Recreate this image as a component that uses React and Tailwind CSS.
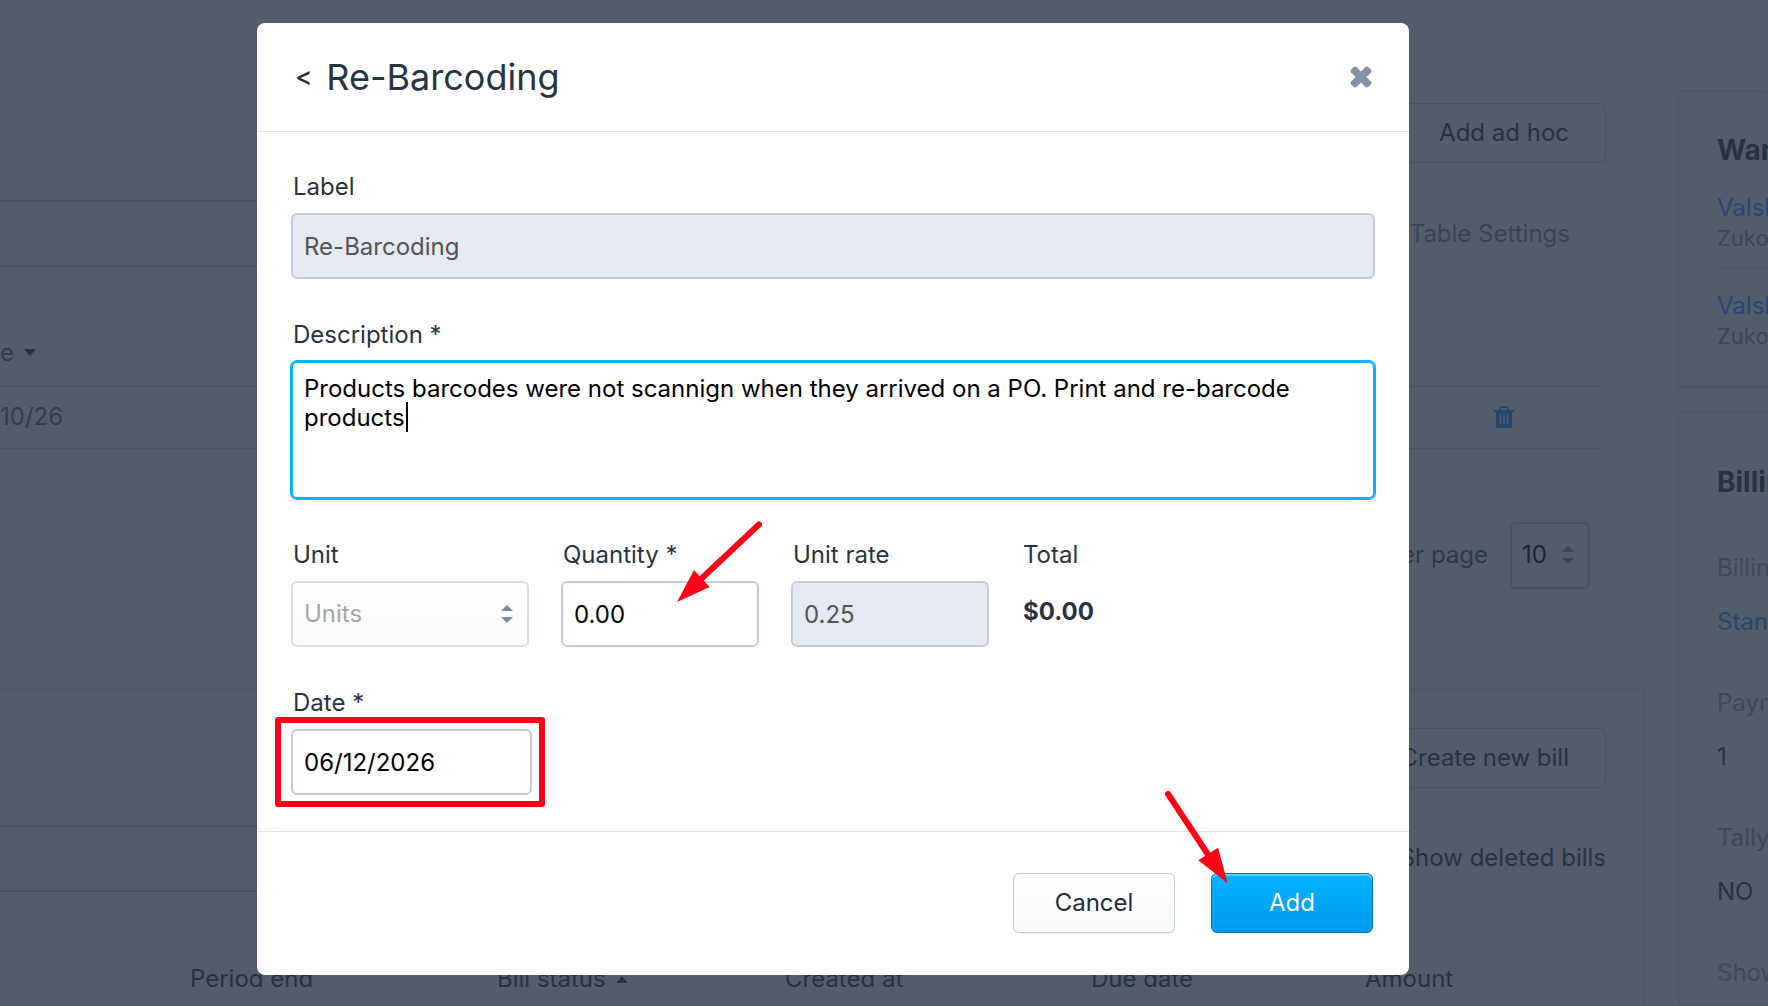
const SortArrows = ({ className }) => (
  <svg viewBox="0 0 12 18" width="12" height="18" fill="currentColor" className={className} aria-hidden="true">
    <path d="M6 0l6 6H0z" />
    <path d="M0 12h12l-6 6z" />
  </svg>
);

const TrashIcon = () => (
  <svg viewBox="0 0 20 22" width="20" height="22" fill="none" aria-hidden="true">
    <path d="M6 4.500L7 1.200H13L14 4.500" stroke="currentColor" strokeWidth="1.800" />
    <path d="M0 4h20v2H0z" fill="currentColor" />
    <path
      d="M2 5h16v14.500a2.500 2.500 0 0 1-2.500 2.500h-11A2.500 2.500 0 0 1 2 19.500z"
      fill="currentColor"
    />
    <path d="M6.500 8v10M10 8v10M13.500 8v10" stroke="#535c6a" strokeWidth="1.500" />
  </svg>
);

const CloseIcon = () => (
  <svg viewBox="0 0 20 20" width="22" height="22" fill="currentColor" aria-hidden="true">
    <rect x="-1" y="6.500" width="22" height="7" rx="2" transform="rotate(45 10 10)" />
    <rect x="-1" y="6.500" width="22" height="7" rx="2" transform="rotate(-45 10 10)" />
  </svg>
);

const QuantityArrow = () => (
  <svg
    viewBox="0 0 92 88"
    width="92"
    height="88"
    className="absolute -top-5 left-[112px] pointer-events-none"
    aria-hidden="true"
  >
    <path d="M86 4.500L28 59" stroke="#ff0018" strokeWidth="6" strokeLinecap="round" />
    <path d="M4 82L21 50L36.600 67z" fill="#ff0018" />
  </svg>
);

const AddArrow = () => (
  <svg
    viewBox="0 0 72 100"
    width="72"
    height="100"
    className="absolute -top-[85px] -left-[49px] pointer-events-none"
    aria-hidden="true"
  >
    <path d="M6 6L47 68" stroke="#ff0018" strokeWidth="6" strokeLinecap="round" />
    <path d="M65.700 95.300L36.300 72.300L56 59.700z" fill="#ff0018" />
  </svg>
);

const Field = ({ id, label, className = "", children }) => (
  <div className={`relative ${className}`}>
    <label htmlFor={id} className="block mb-[11px] pl-[2px] leading-[30px] text-[#273444]">
      {label}
    </label>
    {children}
  </div>
);

const inputStyle = "block w-full h-[66px] px-[11px] rounded-md border-2 outline-none";
const activeInput = `${inputStyle} border-[#c0ccdd] bg-white text-black`;
const disabledInput = `${inputStyle} border-[#c0ccdd] bg-[#e5e9f2] text-[#545454]`;

const backButton =
  "h-[60px] px-9 rounded-md border border-[#465563] text-[#263342] whitespace-nowrap";

const MainColumn = () => (
  <main className="flex-1 min-w-0 flex flex-col">
    <section className="pt-[103px]">
      <div className="flex justify-end pr-[38px]">
        <button type="button" className={backButton}>
          Add ad hoc
        </button>
      </div>
      <div className="flex items-center gap-9 mt-[37px] pr-[74px]">
        <input
          type="text"
          aria-label="Search items"
          className="flex-1 h-[67px] border-y-2 border-r-2 border-[#475663] bg-transparent"
        />
        <button type="button" className="text-[#364555] whitespace-nowrap">
          Table Settings
        </button>
      </div>
      <div className="mt-[53px] mr-[40px]">
        <table className="w-full text-left">
          <thead>
            <tr className="h-[66px] border-b border-[#465462]">
              <th className="font-normal text-[#2f3d4c]">
                <span className="flex items-center gap-[10px]">
                  e
                  <svg viewBox="0 0 12 7" width="12" height="7" fill="#263342" aria-hidden="true">
                    <path d="M0 0h12l-6 7z" />
                  </svg>
                </span>
              </th>
              <th className="w-[110px]" />
            </tr>
          </thead>
          <tbody>
            <tr className="h-[62px] border-b border-[#4a5462]">
              <td className="text-[#303e4c]">10/26</td>
              <td>
                <button type="button" aria-label="Delete" className="block text-[#24486c]">
                  <TrashIcon />
                </button>
              </td>
            </tr>
          </tbody>
        </table>
      </div>
      <div className="flex items-center justify-end gap-[22px] mt-[73px] pr-[54px]">
        <label htmlFor="per-page" className="text-[#2c3a49]">
          Items per page
        </label>
        <div className="relative">
          <select
            id="per-page"
            defaultValue="10"
            className="appearance-none block w-20 h-[67px] pl-[10px] rounded-md border-2 border-[#465563] text-[#1c2632] outline-none"
          >
            <option>10</option>
          </select>
          <SortArrows className="absolute top-6 right-4 text-[#384757] pointer-events-none" />
        </div>
      </div>
    </section>

    <section className="flex-1 mt-[99px] pt-[39px] border-t border-r border-[#4e5865]">
      <div className="flex justify-end pr-[37px]">
        <button type="button" className={backButton}>
          Create new bill
        </button>
      </div>
      <div className="flex items-center gap-9 mt-[37px] pr-[37px]">
        <input
          type="text"
          aria-label="Search bills"
          className="flex-1 h-[67px] border-y-2 border-r-2 border-[#44546a] bg-transparent"
        />
        <button type="button" className="text-[#263342] whitespace-nowrap">
          Show deleted bills
        </button>
      </div>
      <table className="w-full table-fixed mt-[61px] text-left text-[#263342] whitespace-nowrap">
        <thead>
          <tr className="h-[54px] border-b border-[#465462]">
            <th className="w-[190px]" />
            <th className="w-[307px] font-normal">Period end</th>
            <th className="w-[288px] font-normal">
              <span className="flex items-center gap-[10px]">
                Bill status
                <svg viewBox="0 0 12 7" width="12" height="7" fill="currentColor" aria-hidden="true">
                  <path d="M6 0l6 7H0z" />
                </svg>
              </span>
            </th>
            <th className="w-[306px] font-normal">Created at</th>
            <th className="w-[274px] font-normal">Due date</th>
            <th className="font-normal">Amount</th>
          </tr>
        </thead>
      </table>
    </section>
  </main>
);

const sideCard = "border-y border-l border-[#4e5865] pl-[38px] shadow-sm";

const SideColumn = () => (
  <aside className="w-[90px] flex flex-col pt-[91px] overflow-hidden whitespace-nowrap leading-[30px]">
    <section className={`${sideCard} h-[295px] pt-[43px]`}>
      <h2 className="text-[28px] font-bold text-[#263342]">Warehouses</h2>
      <div className="mt-[28px] pb-[15px] border-b border-[#4a5462]">
        <a href="#valsh-1" className="block text-[#284678]">Valsh</a>
        <p className="text-[22px] text-[#3b4857]">Zuko</p>
      </div>
      <div className="mt-[22px]">
        <a href="#valsh-2" className="block text-[#284678]">Valsh</a>
        <p className="text-[22px] text-[#3b4857]">Zuko</p>
      </div>
    </section>
    <section className={`${sideCard} flex-1 mt-[26px] pt-[54px]`}>
      <h2 className="text-[28px] font-bold text-[#263342]">Billing</h2>
      <dl className="mt-[56px]">
        <dt className="text-[#3c4a59]">Billing</dt>
        <dd className="mt-6 mb-[51px]">
          <a href="#profile" className="text-[#24486c]">Standard</a>
        </dd>
        <dt className="text-[#3c4a59]">Payment</dt>
        <dd className="mt-6 mb-[51px] text-[#263342]">1</dd>
        <dt className="text-[#3c4a59]">Tally</dt>
        <dd className="mt-6 mb-[51px] text-[#263342]">NO</dd>
        <dt className="text-[#3c4a59]">Show</dt>
      </dl>
    </section>
  </aside>
);

const Modal = () => (
  <div className="absolute inset-0 pt-[23px] pl-[257px] pr-[359px]">
    <div role="dialog" aria-labelledby="modal-title" className="rounded-lg bg-white text-[#273444]">
      <header className="flex items-center justify-between py-8 pl-[38px] pr-[37px] border-b border-[#e0e2e4]">
        <div className="flex items-center gap-[14px] leading-[44px]">
          <button type="button" aria-label="Back" className="text-[26px] font-medium">
            &lt;
          </button>
          <h1 id="modal-title" className="text-[36px]">
            Re-Barcoding
          </h1>
        </div>
        <button type="button" aria-label="Close" className="text-[#8492a9]">
          <CloseIcon />
        </button>
      </header>

      <form className="flex flex-col gap-[41px] px-[34px] pt-10 pb-9">
        <Field id="label" label="Label">
          <input id="label" type="text" disabled defaultValue="Re-Barcoding" className={disabledInput} />
        </Field>

        <Field id="description" label="Description *">
          <textarea
            id="description"
            defaultValue="Products barcodes were not scannign when they arrived on a PO. Print and re-barcode products"
            className="block w-full h-[138px] px-[11px] py-[11px] rounded-md border-2 border-[#00b5ff] ring-1 ring-[#00b5ff] outline-none resize-none leading-[29px] text-black"
          />
          <span className="absolute left-[115px] top-[82px] w-[2px] h-[30px] bg-black" />
        </Field>

        <div className="flex gap-8">
          <Field id="unit" label="Unit" className="w-[238px]">
            <div className="relative">
              <select
                id="unit"
                disabled
                defaultValue="Units"
                className="appearance-none block w-full h-[66px] px-[11px] rounded-md border-2 border-[#d8dfea] bg-linear-to-b from-white to-[#fafbfb] text-[#a6a6a6] opacity-100"
              >
                <option>Units</option>
              </select>
              <SortArrows className="absolute top-6 right-4 text-[#778da2] pointer-events-none" />
            </div>
          </Field>
          <Field id="quantity" label="Quantity *" className="w-[198px]">
            <input id="quantity" type="text" defaultValue="0.00" className={activeInput} />
            <QuantityArrow />
          </Field>
          <Field id="rate" label="Unit rate" className="w-[198px]">
            <input id="rate" type="text" disabled defaultValue="0.25" className={disabledInput} />
          </Field>
          <div className="pl-[2px]">
            <p className="mb-[11px] leading-[30px]">Total</p>
            <p className="flex items-center h-[62px] font-bold">$0.00</p>
          </div>
        </div>

        <Field id="date" label="Date *" className="w-[241px]">
          <div className="relative">
            <input id="date" type="text" defaultValue="06/12/2026" className={activeInput} />
            <div className="absolute -inset-y-3 -left-4 -right-[13px] border-6 border-[#ff0018] rounded-[3px] pointer-events-none" />
          </div>
        </Field>
      </form>

      <footer className="flex justify-end gap-9 px-9 pt-[41px] pb-[42px] border-t border-[#e0e2e4]">
        <button
          type="button"
          className="w-[162px] h-[60px] rounded-md border border-[#c0ccda] bg-linear-to-b from-white to-[#f9fafa] shadow-xs text-[#1f2d3d]"
        >
          Cancel
        </button>
        <div className="relative">
          <button
            type="button"
            className="w-[162px] h-[60px] rounded-md border border-[#0a78c8] bg-linear-to-b from-[#00b4ff] to-[#0099ee] inset-shadow-[0_2px_0_#5cccff] text-white"
          >
            Add
          </button>
          <AddArrow />
        </div>
      </footer>
    </div>
  </div>
);

const App = () => {
  return (
    <div className="relative flex gap-[34px] h-screen overflow-hidden bg-[#535c6a] font-['Inter',sans-serif] text-[24px]">
      <MainColumn />
      <SideColumn />
      <Modal />
    </div>
  );
};

export default App;
